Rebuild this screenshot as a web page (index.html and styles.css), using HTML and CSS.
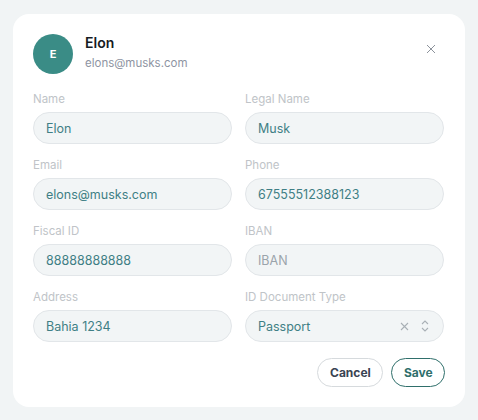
FILE: index.html
```html
<!DOCTYPE html>
<html>
<head>
<meta charset="utf-8">
<link rel="stylesheet" href="styles.css">
</head>
<body>
<div class="card">
  <div class="header">
    <div class="avatar">E</div>
    <div class="who">
      <div class="name">Elon</div>
      <div class="mail">elons@musks.com</div>
    </div>
    <button class="close" aria-label="Close">
      <svg width="10" height="10" viewBox="0 0 10 10"><path d="M1 1L9 9M9 1L1 9" stroke="#8c929b" stroke-width="1" fill="none"/></svg>
    </button>
  </div>
  <div class="grid">
    <div class="field"><label>Name</label><div class="input">Elon</div></div>
    <div class="field"><label>Legal Name</label><div class="input">Musk</div></div>
    <div class="field"><label>Email</label><div class="input">elons@musks.com</div></div>
    <div class="field"><label>Phone</label><div class="input">67555512388123</div></div>
    <div class="field"><label>Fiscal ID</label><div class="input">88888888888</div></div>
    <div class="field"><label>IBAN</label><div class="input placeholder">IBAN</div></div>
    <div class="field"><label>Address</label><div class="input">Bahia 1234</div></div>
    <div class="field"><label>ID Document Type</label>
      <div class="input select">
        <span class="val">Passport</span>
        <svg class="clear" width="9" height="9" viewBox="0 0 9 9"><path d="M1 1L8 8M8 1L1 8" stroke="#a9b0b6" stroke-width="1.1" fill="none"/></svg>
        <svg class="chev" width="8" height="14" viewBox="0 0 8 14"><path d="M1 5L4 2L7 5M1 9L4 12L7 9" stroke="#a9b0b6" stroke-width="1.1" fill="none"/></svg>
      </div>
    </div>
  </div>
  <div class="actions">
    <button class="btn cancel">Cancel</button>
    <button class="btn save">Save</button>
  </div>
</div>
</body>
</html>
```
FILE: styles.css
```css
html, body { margin: 0; padding: 0; }
body {
  background: #f1f4f5;
  font-family: Inter, "Noto Sans", sans-serif;
  width: 478px;
  height: 420px;
  padding: 14px 0 0 13px;
  box-sizing: border-box;
}
.card {
  width: 452px;
  height: 393px;
  background: #fff;
  border-radius: 16px;
  box-sizing: border-box;
  padding: 20px 21px 20px 20px;
}
.header {
  display: flex;
  align-items: center;
  height: 40px;
}
.avatar {
  width: 40px; height: 40px;
  border-radius: 50%;
  background: #3a8c86;
  color: #fff;
  font-weight: 700;
  font-size: 11px;
  display: flex; align-items: center; justify-content: center;
}
.who { margin-left: 12px; flex: 1; }
.name { font-size: 14px; font-weight: 600; color: #161a22; line-height: 17px; margin-top: -4px; }
.mail { font-size: 11.5px; color: #8e94a2; line-height: 14px; margin-top: 5px; }
.close {
  border: 0; background: none; padding: 0;
  width: 10px; height: 10px;
  margin-right: 8px; margin-top: -10px;
  display: flex;
}
.grid {
  margin-top: 17px;
  display: grid;
  grid-template-columns: 199px 199px;
  column-gap: 13px;
  row-gap: 13px;
}
.field label {
  display: block;
  font-size: 11.5px;
  line-height: 16px;
  color: #c0c4c8;
  margin-bottom: 5px;
}
.input {
  height: 32px;
  box-sizing: border-box;
  border: 1px solid #e2e6e9;
  background: #f2f5f6;
  border-radius: 16px;
  padding: 0 12px;
  display: flex;
  align-items: center;
  font-size: 12.5px;
  color: #3f7f85;
}
.input.placeholder { color: #9ba4ab; }
.select .val { flex: 1; }
.select .clear { margin-right: 12px; }
.select .chev { margin-right: 2px; }
.actions {
  margin-top: 16px;
  display: flex;
  justify-content: flex-end;
  gap: 8px;
  margin-right: -1px;
}
.btn {
  height: 29px;
  border-radius: 15px;
  background: #fff;
  font-family: Inter, "Noto Sans", sans-serif;
  font-size: 12px;
  font-weight: 700;
  padding: 0 12px;
  box-sizing: border-box;
}
.cancel { border: 1px solid #d6dadd; color: #3a4452; width: 66px; }
.save { border: 1px solid #2f6f6b; color: #2f6f6b; width: 54px; }
```
